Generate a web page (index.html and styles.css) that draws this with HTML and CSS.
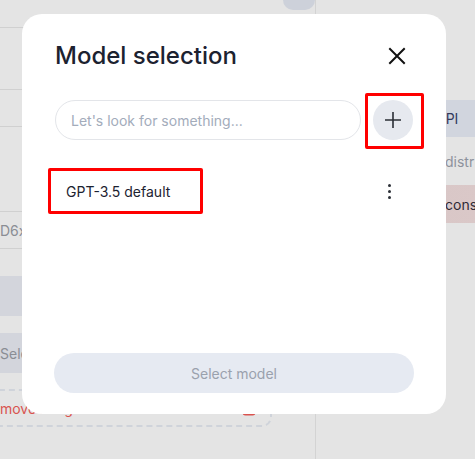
FILE: index.html
```html
<!DOCTYPE html>
<html lang="en">
<head>
<meta charset="utf-8">
<title>Model selection</title>
<link rel="stylesheet" href="styles.css">
</head>
<body>
<div class="page">
  <div class="left-pane">
    <div class="row row-top"><div class="top-pill"></div></div>
    <div class="row row-a"></div>
    <div class="row row-b"></div>
    <div class="row row-c"></div>
    <div class="row row-d"><span class="muted">D6xK92LmQ</span></div>
    <div class="block block-1"></div>
    <div class="block block-2"><span class="muted">Select</span></div>
    <div class="danger-box">
      <span class="danger-text">Remove integration</span>
      <svg class="trash" width="16" height="20" viewBox="0 0 16 20"><path d="M2.5 5v11.5a2 2 0 0 0 2 2h7a2 2 0 0 0 2-2V5" fill="none" stroke="#d9534f" stroke-width="2"/></svg>
    </div>
  </div>
  <div class="right-pane">
    <div class="r-block r-api"><span class="lead">A</span>PI</div>
    <div class="r-line">distribution</div>
    <div class="r-block r-const">constraints</div>
  </div>
</div>

<div class="modal">
  <div class="modal-head">
    <h1 class="modal-title">Model selection</h1>
    <button class="close-btn" aria-label="Close">
      <svg width="18" height="18" viewBox="0 0 18 18"><path d="M2 2L16 16M16 2L2 16" stroke="#111" stroke-width="2" stroke-linecap="square"/></svg>
    </button>
  </div>
  <div class="search-row">
    <input class="search" type="text" placeholder="Let's look for something...">
    <div class="add-wrap">
      <button class="add-btn" aria-label="Add">
        <svg width="20" height="20" viewBox="0 0 20 20"><path d="M10 2V18M2 10H18" stroke="#2b2f36" stroke-width="1.6"/></svg>
      </button>
      <div class="mark mark-add"></div>
    </div>
  </div>
  <div class="model-list">
    <div class="model-item">
      <span class="model-name">GPT-3.5 default</span>
      <span class="kebab"><i></i><i></i><i></i></span>
      <div class="mark mark-item"></div>
    </div>
  </div>
  <button class="select-btn">Select model</button>
</div>
</body>
</html>
```

FILE: styles.css
```css
* { box-sizing: border-box; }
html, body { margin: 0; padding: 0; }
body {
  width: 475px;
  height: 459px;
  overflow: hidden;
  background: #e4e4e4;
  font-family: Inter, "Noto Sans", sans-serif;
  position: relative;
}

/* background page (dimmed) */
.page { display: flex; height: 459px; }
.left-pane {
  width: 316px;
  border-right: 1px solid #d3d3d3;
  display: flex;
  flex-direction: column;
}
.row { border-bottom: 1px solid #d0d0d0; display: flex; align-items: center; }
.row-top { height: 28px; align-items: flex-start; }
.top-pill {
  margin-left: 283px;
  width: 44px;
  height: 10px;
  background: #cdd1da;
  border-radius: 0 0 10px 10px;
}
.row-a { height: 62px; }
.row-b { height: 37px; }
.row-c { height: 85px; }
.row-d { height: 37px; font-size: 14px; }
.muted { color: #8a8d94; font-size: 14px; }
.block { background: #d3d5dc; height: 40px; display: flex; align-items: center; }
.block-1 { margin-top: 27px; }
.block-2 { margin-top: 17px; }
.danger-box {
  margin-top: 16px;
  margin-left: -31px;
  width: 303px;
  height: 38px;
  border: 2px dashed #cfd3da;
  border-radius: 10px;
  display: flex;
  align-items: center;
  justify-content: space-between;
  padding: 0 12px;
}
.danger-text { color: #d9534f; font-size: 14px; }
.trash { margin-right: 1px; margin-top: -4px; }

.right-pane { flex: 1; padding-top: 100px; display: flex; flex-direction: column; font-size: 14px; }
.r-block { height: 37px; display: flex; align-items: center; padding-left: 120px; }
.r-api { background: #d1d5de; color: #333a5c; }
.r-const { background: linear-gradient(90deg, #d6c4c4, #dbc9c9); color: #2e2a36; height: 38px; padding-left: 129px; }
.r-line { height: 48px; display: flex; align-items: center; padding-left: 129px; color: #8d929c; }

/* modal */
.modal {
  position: absolute;
  left: 22px;
  top: 14px;
  width: 424px;
  height: 400px;
  background: #fff;
  border-radius: 20px;
  padding: 26px 33px 21px 33px;
  display: flex;
  flex-direction: column;
}
.modal-head { display: flex; align-items: center; justify-content: space-between; height: 32px; }
.modal-title {
  margin: 0;
  font-size: 24px;
  font-weight: 500;
  color: #1c2230;
  line-height: 32px;
}
.close-btn {
  border: 0;
  background: none;
  padding: 0;
  width: 18px;
  height: 18px;
  margin-right: 7px;
  display: flex;
}
.search-row { margin-top: 28px; display: flex; align-items: center; gap: 12px; }
.search {
  width: 306px;
  height: 40px;
  border: 1px solid #e3e5e9;
  border-radius: 20px;
  padding: 0 15px;
  font-family: Inter, "Noto Sans", sans-serif;
  font-size: 14px;
  color: #1c2230;
  outline: none;
}
.search::placeholder { color: #a3acbb; }
.add-wrap { position: relative; width: 40px; height: 40px; }
.add-btn {
  width: 40px;
  height: 40px;
  border-radius: 50%;
  border: 0;
  background: #e6e9ef;
  display: flex;
  align-items: center;
  justify-content: center;
  padding: 0;
}
.mark { position: absolute; border: 3px solid #f00; border-radius: 2px; pointer-events: none; }
.mark-add { left: -8px; top: -7px; width: 59px; height: 56px; }

.model-list { margin-top: 29px; }
.model-item {
  position: relative;
  height: 44px;
  display: flex;
  align-items: center;
  justify-content: space-between;
  padding: 0 11px;
}
.model-name { font-size: 14px; color: #1c2230; }
.kebab { display: flex; flex-direction: column; gap: 3px; margin-right: 11px; }
.kebab i { width: 3px; height: 3px; border-radius: 50%; background: #2b2f36; display: block; }
.mark-item { left: -7px; top: -1px; width: 155px; height: 46px; }

.select-btn {
  margin-top: auto;
  margin-left: -1px;
  width: 360px;
  height: 40px;
  border: 0;
  border-radius: 20px;
  background: #e6eaf2;
  color: #9aa1ad;
  font-family: Inter, "Noto Sans", sans-serif;
  font-size: 14px;
}
```
